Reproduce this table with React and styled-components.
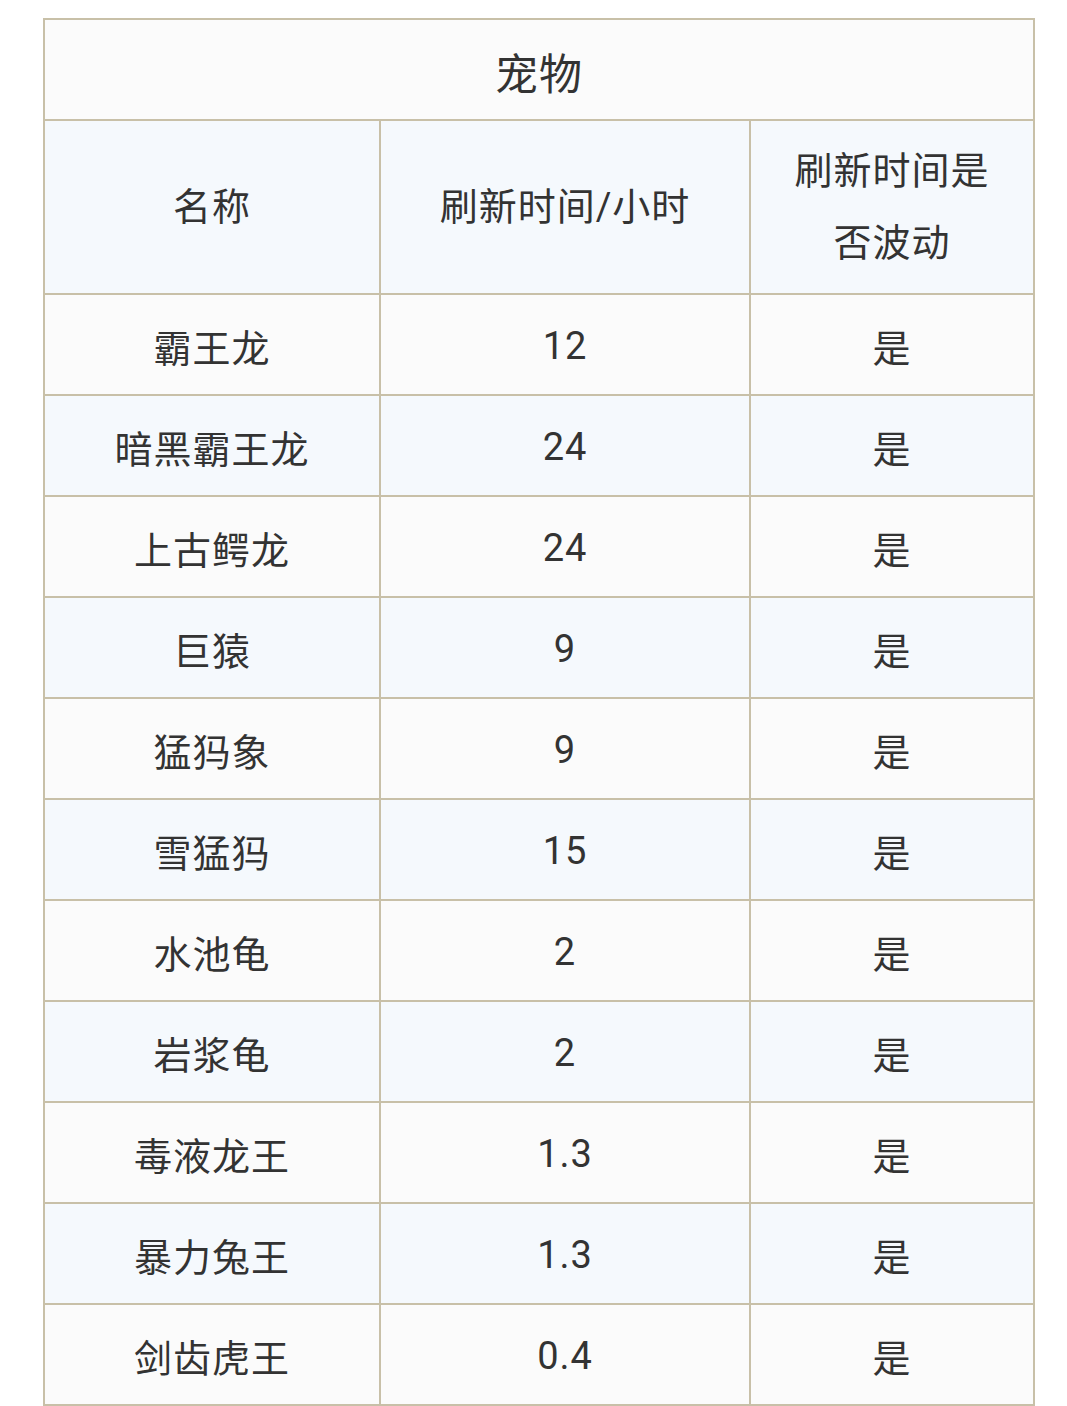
import React from "react";
import styled, { createGlobalStyle } from "styled-components";

const GlobalStyle = createGlobalStyle`
  body {
    margin: 0;
    background: #ffffff;
    font-family: Roboto, "Noto Sans CJK SC", sans-serif;
  }
`;

const Wrapper = styled.div`
  padding: 18px 32px 0 43px;
`;

const Table = styled.table`
  width: 990px;
  border-collapse: collapse;
  table-layout: fixed;
  color: #333;
  font-size: 38px;
  letter-spacing: 1px;
`;

const Caption = styled.th`
  height: 97px;
  padding: 2px 0 0;
  font-size: 43px;
  font-weight: 400;
  background: #fbfbfb;
  border: 2px solid #c8c0a8;
`;

const Row = styled.tr`
  background: ${(props) => (props.$striped ? "#f5f9fd" : "#fbfbfb")};
`;

const HeadCell = styled.th`
  font-weight: 400;
  line-height: 72px;
  padding: 14px 38px;
  border: 2px solid #c8c0a8;
  text-align: center;
`;

const Cell = styled.td`
  height: 101px;
  box-sizing: border-box;
  padding: 2px 16px 0;
  border: 2px solid #c8c0a8;
  text-align: center;
`;

const pets = [
  ["霸王龙", "12"],
  ["暗黑霸王龙", "24"],
  ["上古鳄龙", "24"],
  ["巨猿", "9"],
  ["猛犸象", "9"],
  ["雪猛犸", "15"],
  ["水池龟", "2"],
  ["岩浆龟", "2"],
  ["毒液龙王", "1.3"],
  ["暴力兔王", "1.3"],
  ["剑齿虎王", "0.4"],
];

function App() {
  return (
    <Wrapper>
      <GlobalStyle />
      <Table>
        <colgroup>
          <col style={{ width: 336 }} />
          <col style={{ width: 370 }} />
          <col style={{ width: 284 }} />
        </colgroup>
        <thead>
          <tr>
            <Caption colSpan={3}>宠物</Caption>
          </tr>
          <Row $striped>
            <HeadCell>名称</HeadCell>
            <HeadCell>刷新时间/小时</HeadCell>
            <HeadCell>刷新时间是否波动</HeadCell>
          </Row>
        </thead>
        <tbody>
          {pets.map(([name, hours], i) => (
            <Row key={name} $striped={i % 2 === 1}>
              <Cell>{name}</Cell>
              <Cell>{hours}</Cell>
              <Cell>是</Cell>
            </Row>
          ))}
        </tbody>
      </Table>
    </Wrapper>
  );
}

export default App;
